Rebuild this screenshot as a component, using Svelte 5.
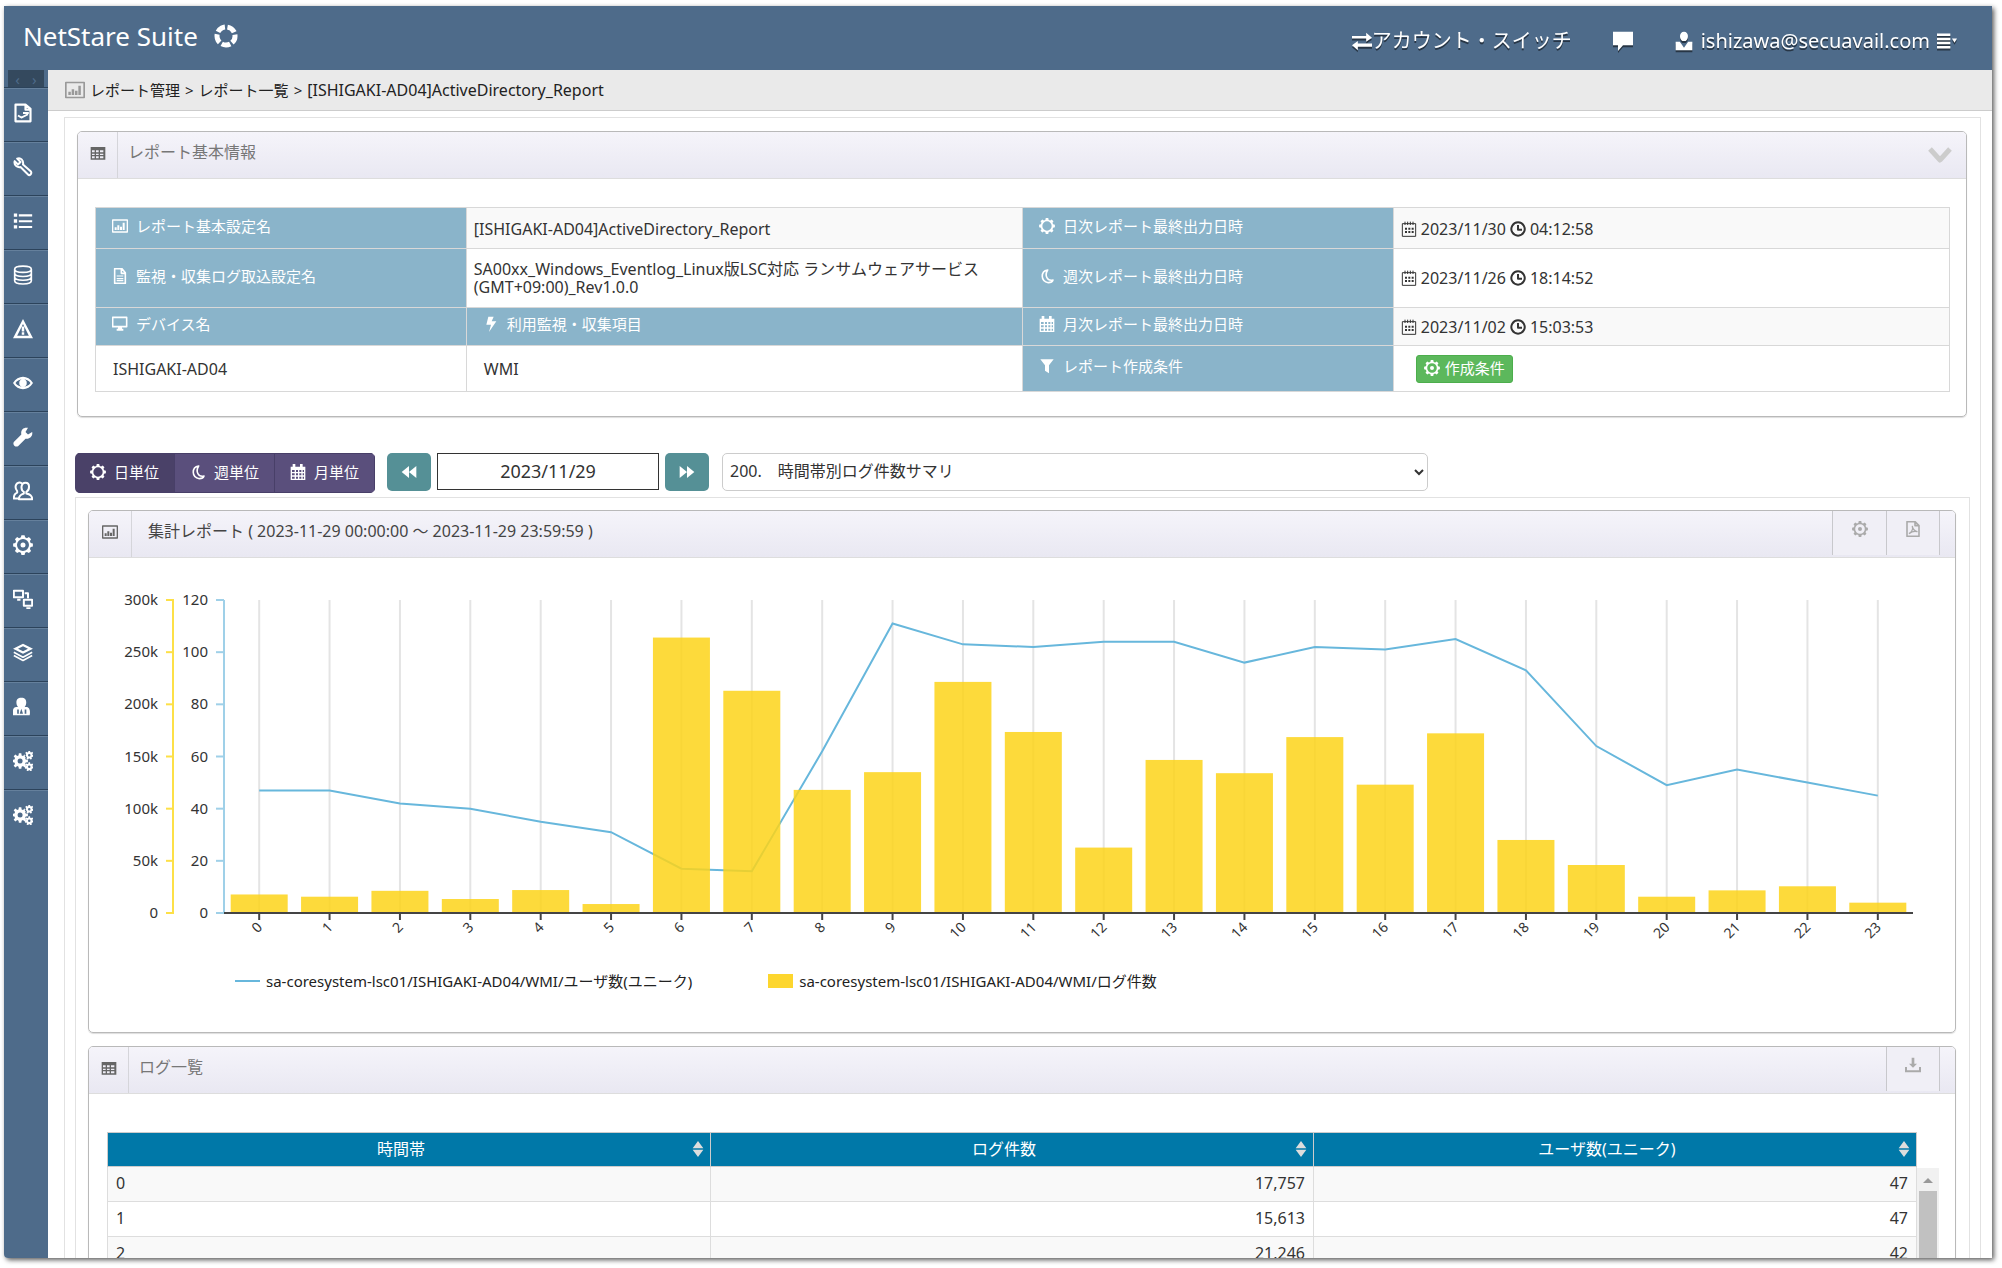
<script>
  const users = [47, 47, 42, 40, 35, 31, 17, 16, 62, 111, 103, 102, 104, 104, 96, 102, 101, 105, 93, 64, 49, 55, 50, 45];
  const logs = [
    17757, 15613, 21246, 13400, 22000, 8600, 264000, 213000, 118000, 135000, 221500, 173500,
    62700, 146700, 134000, 168600, 123000, 172200, 70000, 46000, 15600, 21700, 25600, 9900,
  ];

  const pageRows = 3;

  const menu = [
    "report", "wrench", "list", "database", "warning", "eye", "spanner",
    "users", "gear", "network", "layers", "operator", "cogs", "cogs",
  ];

  let unit = $state("day");
  let date = $state("2023/11/29");
  let chartWidth = $state(1865);

  const units = [
    { id: "day", icon: "sun", label: "日単位" },
    { id: "week", icon: "moon", label: "週単位" },
    { id: "month", icon: "calendar", label: "月単位" },
  ];

  // chart geometry
  const left = 135;
  const top = 42;
  const plotH = 313;
  const bottom = top + plotH;
  let plotW = $derived(chartWidth - left - 42);
  let band = $derived(plotW / 24);

  const cx = (i) => left + band * (i + 0.5);
  const yLog = (v) => bottom - (v / 300000) * plotH;
  const yUser = (v) => bottom - (v / 120) * plotH;
  let line = $derived(users.map((v, i) => `${cx(i)},${yUser(v)}`).join(" "));

  function gearPath(x, y, outer, inner, teeth) {
    const pts = [];
    const step = (Math.PI * 2) / teeth;
    for (let i = 0; i < teeth; i++) {
      const a = i * step - Math.PI / 2;
      for (const [r, o] of [[inner, -0.34], [outer, -0.2], [outer, 0.2], [inner, 0.34]]) {
        pts.push(`${(x + r * Math.cos(a + o * step)).toFixed(2)} ${(y + r * Math.sin(a + o * step)).toFixed(2)}`);
      }
    }
    return "M" + pts.join("L") + "Z";
  }

  const hole = (x, y, r) => `M${x - r} ${y}a${r} ${r} 0 1 0 ${2 * r} 0a${r} ${r} 0 1 0 ${-2 * r} 0Z`;
  const solid = (d) => `<path fill="currentColor" fill-rule="evenodd" d="${d}"/>`;
  const stroke = (d, w = 2) =>
    `<path fill="none" stroke="currentColor" stroke-width="${w}" stroke-linejoin="round" d="${d}"/>`;

  const icons = {
    ring: `<circle cx="12" cy="12" r="9" fill="none" stroke="currentColor" stroke-width="5" stroke-dasharray="8.8 2.51" transform="rotate(62 12 12)"/>`,
    report: stroke("M3 2h12l6 5v15H3ZM15 2v6h6", 2.6) + stroke("M6 15l4 2.500 8-4M12 12h7", 2.2),
    wrench: stroke("M5 2l4 4-3 3-4-4c-1 4 2 8 7 7l9 9c2 2 5-1 3.500-3.500L12 9C13 4 9 0 5 2Z", 2.4),
    list: solid("M1 3h4v4H1ZM1 10h4v4H1ZM1 17h4v4H1ZM7 4h16v2.500H7ZM7 11h16v2.500H7ZM7 18h16v2.500H7Z"),
    database: stroke("M2 5c0-5 20-5 20 0s-20 5-20 0v14c0 5 20 5 20 0V5M2 10c0 5 20 5 20 0M2 14.500c0 5 20 5 20 0", 2),
    warning: solid("M12 0L24 23H0ZM12 6L5 20h14ZM10.500 9h3v6h-3ZM10.500 16h3v3h-3Z"),
    eye: solid("M0 12C6 2 18 2 24 12 18 22 6 22 0 12ZM3 12c4 6 14 6 18 0-4-6-14-6-18 0Z" + hole(12, 12, 4.5)),
    spanner: solid("M23 6l-5 3-3-3 3-5c-6-1-9 3-8 8L1 18c-2 3 2 7 5 5l9-9c5 1 9-3 8-8Z"),
    users: stroke("M15 2c6 0 5 9 1 11v2c4 1 7 2 7 7H7c0-5 3-6 6-7v-2C9 11 9 2 15 2ZM11 3C4-1 1 7 5 12v2c-3 1-4 3-4 7h6", 2.4),
    gear: solid(gearPath(12, 12, 12, 9.5, 8) + hole(12, 12, 7.2) + hole(12, 12, 3)),
    network: stroke("M1 2h11v8H1ZM13 13h10v7H13ZM5 13h4M16 23h5M14 5h4v6", 2.4),
    layers: solid("M12 1l12 6-12 6L0 7ZM12 4L6 7l6 3 6-3Z") + stroke("M1 11l11 6 11-6M1 15l11 6 11-6", 2),
    operator: solid("M10 1c7 0 7 7 4 11h2c4 0 5 5 4 10H0c-1-5 0-10 4-10h2C3 8 3 1 10 1ZM5 15v5h2v-5ZM10 14l-2 6h4ZM14 15v5h2v-5Z"),
    cogs: solid(
      gearPath(8.5, 12, 9.5, 7, 8) + hole(8.5, 12, 3) + gearPath(19.5, 5, 5.5, 4, 7) +
      hole(19.5, 5, 1.5) + gearPath(19.5, 19, 5.5, 4, 7) + hole(19.5, 19, 1.5)
    ),
    swap: solid("M0 6h17V2l7 6-7 5V9H0ZM24 15H7v-3l-7 5 7 6v-4h17Z"),
    comment: solid("M0 1h24v16H12l-6 7v-7H0Z"),
    person: solid("M12 1c6 0 6 9 2 11h-4C6 10 6 1 12 1ZM2 13h5l5 7 5-7h5v10H2Z"),
    lines: solid("M0 3h16v3H0ZM0 8h16v3H0ZM0 13h16v3H0ZM0 18h16v3H0ZM18 9h6l-3 5Z"),
    chart: stroke("M1 3h22v18H1Z") + solid("M4 14h3v4H4ZM8 11h3v7H8ZM12 13h3v5h-3ZM16 7h3v11h-3Z"),
    grid: solid("M1 3h22v19H1ZM3 8v3h4V8ZM9 8v3h4V8ZM15 8v3h5V8ZM3 13v2h4v-2ZM9 13v2h4v-2ZM15 13v2h5v-2ZM3 17v3h4v-3ZM9 17v3h4v-3ZM15 17v3h5v-3Z"),
    file: stroke("M4 1h11l5 6v16H4ZM14 1v7h6", 2.4) + stroke("M7 12h10M7 16h10M7 19h10", 1.8),
    monitor: stroke("M1 2h21v14H1Z", 2.4) + solid("M9 16h6v3h2v3H7v-3h2Z"),
    bolt: solid("M8 1h8l-3 7h7L9 24l3-11H5Z"),
    sun: solid(gearPath(12, 12, 12, 9.5, 8) + hole(12, 12, 7)),
    moon: stroke("M13 3C2 5 2 20 14 22c3 0 6-1 7-4C12 20 8 11 13 3Z", 2.4),
    calendar: solid("M1 4h3V0h4v4h7V0h4v4h4v20H1ZM3 9v3h4V9ZM9 9v3h3V9ZM14 9v3h3V9ZM19 9v3h2V9ZM3 14v3h4v-3ZM9 14v3h3v-3ZM14 14v3h3v-3ZM19 14v3h2v-3ZM3 19v3h4v-3ZM9 19v3h3v-3ZM14 19v3h3v-3ZM19 19v3h2v-3Z"),
    filter: solid("M2 2h20l-7 9v12l-6-4v-8Z"),
    dates: stroke("M2 4h20v19H2ZM6 1v5M10 1v5M14 1v5M18 1v5", 1.5) + solid("M6 10h3v3H6ZM11 10h3v3h-3ZM16 10h3v3h-3ZM6 15h3v3H6ZM11 15h3v3h-3ZM16 15h3v3h-3Z"),
    clock: stroke("M12 2a10 10 0 1 0 .1 0ZM12 6v7h6", 3),
    rewind: solid("M12 3v18L1 12ZM23 3v18l-11-9Z"),
    forward: solid("M12 3v18l11-9ZM1 3v18l11-9Z"),
    chevron: stroke("M2 6l10 11L22 6", 5),
    pdf: stroke("M3 1h12l6 6v16H3ZM15 1v6h6", 2.4) + stroke("M6 19c5-3 6-8 5-11 1 5 4 7 7 8-4-1-8 0-12 3", 2),
    download: solid("M10 1h4v9h4l-6 6-6-6h4ZM0 15h3v5h18v-5h3v8H0Z"),
    sort: solid("M12 0l8 11H4ZM12 24l8-11H4Z"),
  };
</script>

{#snippet icon(name, size = "")}
  <svg class="icon {size}" viewBox="0 0 24 24" aria-hidden="true">{@html icons[name]}</svg>
{/snippet}

{#snippet stamp(day, time)}
  <span class="stamp">{@render icon("dates")}<span>{day}</span>{@render icon("clock")}<span>{time}</span></span>
{/snippet}

<div class="app">
  <header>
    <a class="brand" href="#top"><span>NetStare Suite</span>{@render icon("ring", "xl")}</a>
    <nav class="account">
      <a class="switch" href="#switch">{@render icon("swap", "lg")}<span>アカウント・スイッチ</span></a>
      <a href="#messages" aria-label="メッセージ">{@render icon("comment", "lg")}</a>
      <a class="user" href="#user">
        {@render icon("person", "lg")}<span>ishizawa@secuavail.com</span>{@render icon("lines", "lg")}
      </a>
    </nav>
  </header>

  <div class="body">
    <aside>
      <button class="toggle" aria-label="メニュー"><span>‹</span><span>›</span></button>
      {#each menu as name}
        <a class="item" href="#{name}" aria-label={name}>{@render icon(name, "lg")}</a>
      {/each}
    </aside>

    <main>
      <div class="crumbs">
        {@render icon("chart", "lg")}
        <a href="#reports">レポート管理</a><span>&gt;</span><a href="#list">レポート一覧</a><span>&gt;</span>
        <span class="here">[ISHIGAKI-AD04]ActiveDirectory_Report</span>
      </div>

      <div class="frame">
        <section class="panel info">
          <div class="bar">
            <span class="mark">{@render icon("grid")}</span>
            <h2 class="muted">レポート基本情報</h2>
            <button class="fold" aria-label="折りたたむ">{@render icon("chevron", "xl")}</button>
          </div>
          <table class="props">
            <tbody>
              <tr class="r1">
                <th>{@render icon("chart")}<span>レポート基本設定名</span></th>
                <td>[ISHIGAKI-AD04]ActiveDirectory_Report</td>
                <th>{@render icon("sun")}<span>日次レポート最終出力日時</span></th>
                <td>{@render stamp("2023/11/30", "04:12:58")}</td>
              </tr>
              <tr class="r2">
                <th>{@render icon("file")}<span>監視・収集ログ取込設定名</span></th>
                <td>SA00xx_Windows_Eventlog_Linux版LSC対応 ランサムウェアサービス(GMT+09:00)_Rev1.0.0</td>
                <th>{@render icon("moon")}<span>週次レポート最終出力日時</span></th>
                <td>{@render stamp("2023/11/26", "18:14:52")}</td>
              </tr>
              <tr class="r3">
                <th>{@render icon("monitor")}<span>デバイス名</span></th>
                <th>{@render icon("bolt")}<span>利用監視・収集項目</span></th>
                <th>{@render icon("calendar")}<span>月次レポート最終出力日時</span></th>
                <td>{@render stamp("2023/11/02", "15:03:53")}</td>
              </tr>
              <tr class="r4">
                <td class="deep">ISHIGAKI-AD04</td>
                <td class="deep">WMI</td>
                <th>{@render icon("filter")}<span>レポート作成条件</span></th>
                <td class="act"><button class="cond">{@render icon("gear")}<span>作成条件</span></button></td>
              </tr>
            </tbody>
          </table>
        </section>

        <div class="tools">
          <div class="units">
            {#each units as u}
              <button class:active={unit === u.id} onclick={() => (unit = u.id)}>
                {@render icon(u.icon)}<span>{u.label}</span>
              </button>
            {/each}
          </div>
          <button class="step" aria-label="前へ">{@render icon("rewind")}</button>
          <input type="text" aria-label="日付" bind:value={date} />
          <button class="step" aria-label="次へ">{@render icon("forward")}</button>
          <select aria-label="レポート">
            <option>200.　時間帯別ログ件数サマリ</option>
          </select>
        </div>

        <div class="frame inner">
          <section class="panel">
            <div class="bar">
              <span class="mark wide">{@render icon("chart")}</span>
              <h2>集計レポート ( 2023-11-29 00:00:00 ～ 2023-11-29 23:59:59 )</h2>
              <button class="tab" aria-label="設定">{@render icon("gear")}</button>
              <button class="tab" aria-label="PDF">{@render icon("pdf")}</button>
            </div>
            <div class="plot" bind:clientWidth={chartWidth}>
              <svg class="chart" width={chartWidth} height="398">
                {#each [0, 1, 2, 3, 4, 5, 6] as t}
                  {@const y = bottom - (t * plotH) / 6}
                  <text class="num" x="69" y={y + 5}>{t ? `${t * 50}k` : 0}</text>
                  <line class="log-axis" x1="77" x2="85" y1={y} y2={y} />
                  <text class="num" x="119" y={y + 5}>{t * 20}</text>
                  <line class="user-axis" x1="127" x2={left} y1={y} y2={y} />
                {/each}
                <line class="log-axis" x1="84" x2="84" y1={top} y2={bottom} />
                <line class="user-axis" x1={left} x2={left} y1={top} y2={bottom} />
                {#each logs as v, i}
                  <line class="grid" x1={cx(i)} x2={cx(i)} y1={top} y2={bottom} />
                {/each}
                <polyline points={line} />
                {#each logs as v, i}
                  <rect x={cx(i) - band * 0.405} y={yLog(v)} width={band * 0.81} height={bottom - yLog(v)} />
                  <line class="base" x1={cx(i)} x2={cx(i)} y1={bottom} y2={bottom + 7} />
                  <text class="hour" transform="translate({cx(i) + 4} {bottom + 15}) rotate(-45)">{i}</text>
                {/each}
                <line class="base" x1={left} x2={left + plotW} y1={bottom} y2={bottom} />
              </svg>
              <div class="legend">
                <span><i class="key-line"></i>sa-coresystem-lsc01/ISHIGAKI-AD04/WMI/ユーザ数(ユニーク)</span>
                <span><i class="key-bar"></i>sa-coresystem-lsc01/ISHIGAKI-AD04/WMI/ログ件数</span>
              </div>
            </div>
          </section>

          <section class="panel">
            <div class="bar">
              <span class="mark">{@render icon("grid")}</span>
              <h2 class="muted">ログ一覧</h2>
              <button class="tab" aria-label="ダウンロード">{@render icon("download")}</button>
            </div>
            <div class="list">
              <table class="rows">
                <thead>
                  <tr>
                    {#each ["時間帯", "ログ件数", "ユーザ数(ユニーク)"] as head}
                      <th><div><span>{head}</span>{@render icon("sort")}</div></th>
                    {/each}
                  </tr>
                </thead>
                <tbody>
                  {#each logs.slice(0, pageRows) as v, i}
                    <tr>
                      <td>{i}</td>
                      <td>{v.toLocaleString("en-US")}</td>
                      <td>{users[i]}</td>
                    </tr>
                  {/each}
                </tbody>
              </table>
              <div class="scroll"><span class="up"></span><span class="thumb"></span></div>
            </div>
          </section>
        </div>
      </div>
    </main>
  </div>
</div>

<style>
  :global(body) {
    background: #fff;
    overflow: hidden;
  }

  .app {
    display: flex;
    flex-direction: column;
    height: calc(100vh - 16px);
    margin: 6px 10px 10px 4px;
    overflow: hidden;
    background: #fff;
    border-radius: 0 0 0 4px;
    box-shadow: 2px 2px 5px rgba(0, 0, 0, 0.65);
    color: #333;
    font-family: "Noto Sans", "Noto Sans CJK JP", sans-serif;
    font-size: 15px;
    line-height: 18px;
  }

  .app * {
    box-sizing: border-box;
  }

  a {
    color: inherit;
    text-decoration: none;
  }

  button,
  input,
  select {
    font: inherit;
    margin: 0;
  }

  button {
    display: flex;
    align-items: center;
    justify-content: center;
    padding: 0;
    border: 0;
    background: none;
    color: inherit;
    cursor: pointer;
  }

  .icon {
    display: block;
    flex: none;
    width: 16px;
    height: 16px;
  }

  .icon.lg {
    width: 20px;
    height: 20px;
  }

  .icon.xl {
    width: 24px;
    height: 24px;
  }

  header {
    display: flex;
    flex: none;
    justify-content: space-between;
    height: 64px;
    padding: 0 35px 0 19px;
    background: #4e6b8a;
    color: #fff;
  }

  .brand {
    display: flex;
    align-items: center;
    gap: 16px;
    padding-bottom: 5px;
    font-size: 26px;
    line-height: 32px;
  }

  .account {
    display: flex;
    align-items: center;
    gap: 41px;
    padding-top: 5px;
    font-size: 20px;
    line-height: 28px;
  }

  .account a {
    display: flex;
    align-items: center;
    filter: drop-shadow(0 2px 0 rgba(0, 0, 0, 0.5));
  }

  .account .user {
    gap: 7px;
  }

  .body {
    display: flex;
    flex: 1;
    min-height: 0;
  }

  aside {
    flex: none;
    width: 44px;
    background: #4e6b8a;
    color: #fff;
  }

  .toggle {
    width: 36px;
    height: 17px;
    margin-left: 4px;
    gap: 12px;
    background: #34495e;
    color: #4e6b8a;
  }

  .item {
    display: flex;
    align-items: center;
    height: 54px;
    padding: 0 0 4px 9px;
    border-top: 1px solid #2c435b;
    box-shadow: inset 0 1px 0 #65809c;
  }

  main {
    flex: 1;
    min-width: 0;
  }

  .crumbs {
    display: flex;
    align-items: center;
    gap: 5px;
    height: 41px;
    padding: 0 0 1px 17px;
    border-bottom: 1px solid #ccc;
    background: #eaeaea;
    color: #222;
  }

  .crumbs .icon {
    color: #999;
  }

  .crumbs .here {
    font-size: 16px;
  }

  .frame {
    margin: 6px 11px 0 16px;
    padding: 13px 10px 0;
    border: 1px solid #e2e2e2;
  }

  .frame.inner {
    margin: 4px 0 0;
    padding: 12px 13px 0 12px;
  }

  .panel {
    margin-bottom: 13px;
    border: 1px solid #b9b9b9;
    border-radius: 5px;
    box-shadow: 0 1px 1px #ddd;
  }

  .panel.info {
    margin: 0 3px 36px 2px;
  }

  .bar {
    display: flex;
    height: 47px;
    border-bottom: 1px solid #ddd;
    border-radius: 4px 4px 0 0;
    background: linear-gradient(#f5f4fa, #e9e8f2);
  }

  .mark {
    display: flex;
    align-items: center;
    justify-content: center;
    width: 40px;
    padding-bottom: 5px;
    border-right: 1px solid #d5d5da;
    color: #666;
  }

  .mark.wide {
    width: 43px;
  }

  h2 {
    flex: 1;
    margin: 0;
    padding: 8px 0 0 16px;
    color: #444;
    font-size: 16px;
    font-weight: 400;
    line-height: 24px;
  }

  h2.muted {
    padding-left: 10px;
    color: #777;
  }

  .fold {
    width: 52px;
    color: #ccc;
  }

  .tab {
    width: 54px;
    height: 44px;
    padding-bottom: 8px;
    border-left: 1px solid #c8c8cc;
    color: #aaa;
    background: #f0eff6;
  }

  .tab:last-child {
    margin-right: 15px;
    border-right: 1px solid #c8c8cc;
  }

  .props {
    width: calc(100% - 33px);
    margin: 28px 16px 24px 17px;
    border-collapse: collapse;
    table-layout: fixed;
  }

  .props th,
  .props td {
    padding: 1px 7px 0;
    border: 1px solid #d8d8d8;
    font-size: 16px;
    text-align: left;
    font-weight: 400;
  }

  .props tr:nth-child(odd) td {
    background: #f9f9f9;
  }

  .props th {
    padding: 0 16px 5px;
    background: #8ab4ca;
    color: #fff;
    font-size: 15px;
    white-space: nowrap;
  }

  .props th:nth-child(odd) {
    width: 20%;
  }

  .props th .icon,
  .stamp .icon {
    display: inline-block;
    margin-right: 8px;
    vertical-align: -2px;
  }

  .props .r1 th,
  .props .r1 td {
    height: 41px;
  }

  .props .r2 th,
  .props .r2 td {
    height: 59px;
  }

  .props .r2 td {
    padding-bottom: 2px;
  }

  .props .r3 th,
  .props .r3 td {
    height: 38px;
  }

  .props .r4 th,
  .props .r4 td {
    height: 46px;
  }

  .props .deep {
    padding-left: 17px;
  }

  .props .act {
    padding: 0 22px;
  }

  .stamp .icon {
    margin-right: 4px;
  }

  .stamp span {
    margin-right: 4px;
  }

  .cond {
    gap: 5px;
    height: 28px;
    padding: 0 7px 2px;
    border: 1px solid #4cae4c;
    border-radius: 3px;
    background: #5cb85c;
    color: #fff;
    font-size: 15px;
  }

  .tools {
    display: flex;
    align-items: flex-start;
    gap: 6px;
    height: 40px;
  }

  .units {
    display: flex;
    margin-right: 6px;
    border-radius: 5px;
    overflow: hidden;
    color: #fff;
  }

  .units button {
    gap: 8px;
    height: 40px;
    padding: 0 15px 3px;
    border: 1px solid #483f68;
    border-left-width: 0;
    background: #5a4f7c;
  }

  .units .active {
    background: #4a4168;
  }

  .step {
    width: 44px;
    height: 38px;
    border-radius: 5px;
    background: #559096;
    color: #fff;
  }

  input {
    width: 222px;
    height: 37px;
    padding: 0 0 2px;
    border: 1px solid #333;
    background: #fff;
    color: #333;
    font-size: 18px;
    text-align: center;
  }

  select {
    width: 706px;
    height: 38px;
    margin-left: 7px;
    padding: 0 3px 2px;
    border: 1px solid #ccc;
    border-radius: 5px;
    background: #fff;
    color: #333;
    font-size: 16px;
  }

  .plot {
    height: 474px;
  }

  .chart {
    display: block;
  }

  .num {
    fill: #333;
    text-anchor: end;
  }

  .hour {
    fill: #333;
    font-size: 14px;
    text-anchor: end;
  }

  .log-axis {
    stroke: #fde047;
    stroke-width: 2;
  }

  .user-axis {
    stroke: #9fd0e8;
    stroke-width: 2;
  }

  .grid {
    stroke: #e4e4e4;
    stroke-width: 2;
  }

  .base {
    stroke: #444;
    stroke-width: 2;
  }

  polyline {
    fill: none;
    stroke: #67b7dc;
    stroke-width: 2;
  }

  rect {
    fill: #fdd419;
    fill-opacity: 0.85;
  }

  .legend {
    display: flex;
    gap: 76px;
    padding: 16px 0 0 146px;
    color: #222;
  }

  .legend span {
    display: flex;
    align-items: center;
    gap: 6px;
  }

  .key-line {
    width: 25px;
    height: 2px;
    background: #67b7dc;
  }

  .key-bar {
    width: 25px;
    height: 14px;
    background: #fdd62e;
  }

  .list {
    display: flex;
    padding: 38px 16px 0 18px;
  }

  .rows {
    width: 100%;
    border-collapse: collapse;
    table-layout: fixed;
  }

  .rows th {
    height: 34px;
    padding: 0 4px 2px;
    border: 1px solid #ccc;
    background: #0078a8;
    color: #fff;
    font-size: 16px;
    font-weight: 400;
  }

  .rows th div {
    display: flex;
    align-items: center;
  }

  .rows th span {
    flex: 1;
  }

  .rows th .icon {
    color: #ddd;
  }

  .rows td {
    height: 35px;
    padding: 0 8px 2px;
    border: 1px solid #ddd;
    font-size: 16px;
    text-align: right;
  }

  .rows td:first-child {
    text-align: left;
  }

  .rows tbody tr:nth-child(odd) {
    background: #f9f9f9;
  }

  .scroll {
    display: flex;
    flex: none;
    flex-direction: column;
    align-items: center;
    width: 22px;
    margin-top: 36px;
    background: #f1f1f1;
  }

  .up {
    margin: 10px 0 8px;
    border: 5px solid transparent;
    border-top-width: 0;
    border-bottom-color: #999;
  }

  .thumb {
    flex: 1;
    width: 18px;
    background: #c1c1c1;
  }
</style>
